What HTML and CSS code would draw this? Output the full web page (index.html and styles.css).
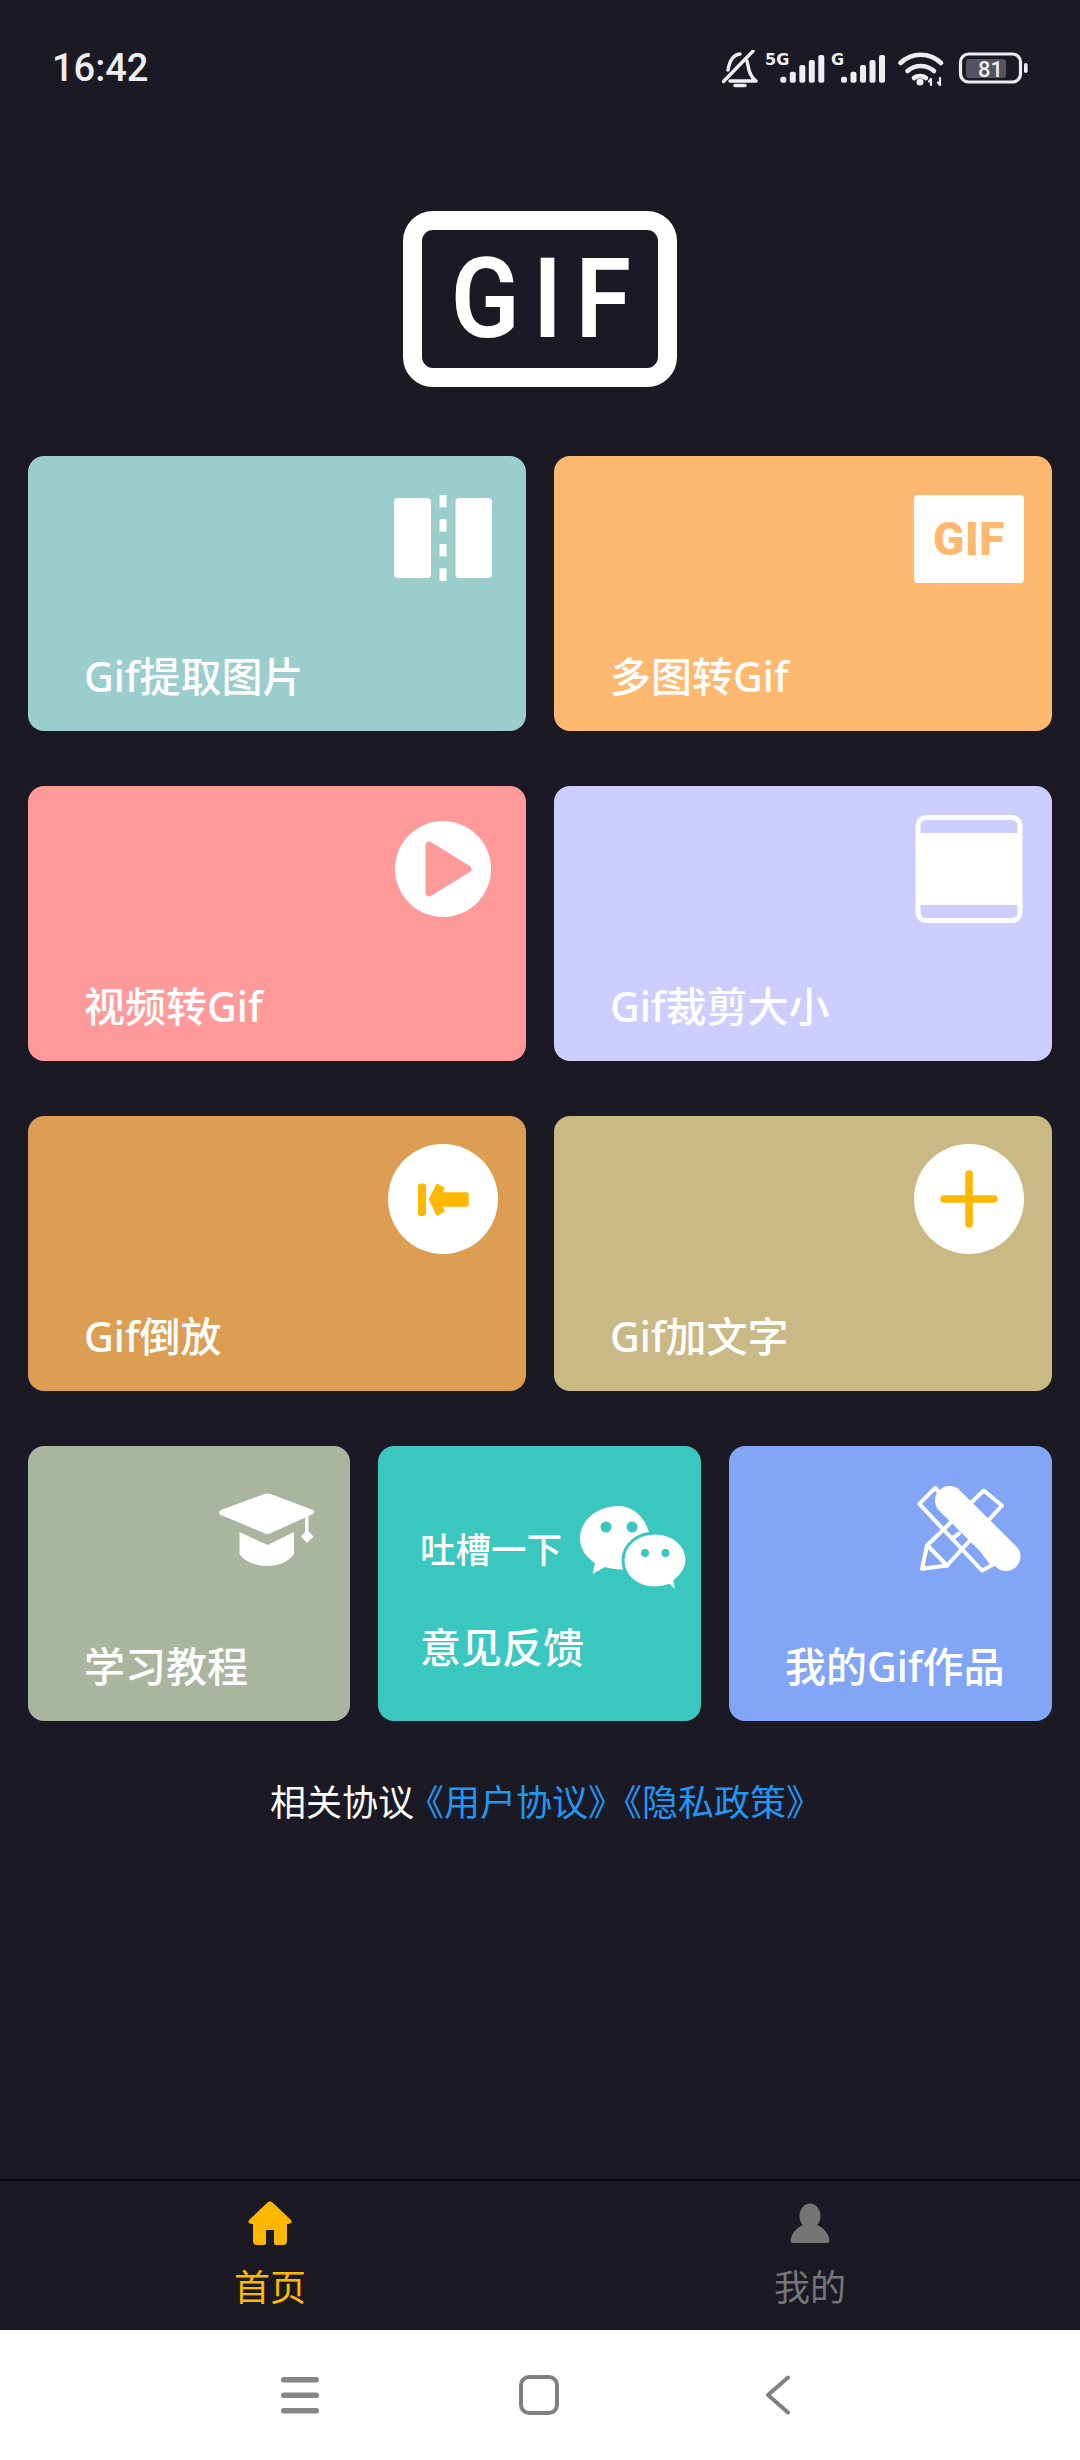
FILE: index.html
```html
<!DOCTYPE html>
<html lang="zh-CN">
<head>
    <meta charset="UTF-8">
    <meta name="viewport" content="width=device-width, initial-scale=1.0">
    <title>GIF</title>
    <link rel="stylesheet" href="styles.css">
</head>
<body>
    <div class="page">
        <div class="status-bar">
            <span class="time">16:42</span>
            <div class="status-icons">
                <!-- bell muted -->
                <svg class="ic-bell" width="36" height="38" viewBox="0 0 36 38" fill="none" stroke="#eeeef0" stroke-width="3.4" stroke-linecap="round" stroke-linejoin="round">
                    <path d="M1.5 31.5 31 1"/>
                    <path d="M6 20C7 14 9 5 18 4M25 11C26.500 16 26 25 34 31H8"/>
                    <path d="M13 35.500H23"/>
                </svg>
                <!-- 5G signal -->
                <svg class="ic-sig-a" width="60" height="35" viewBox="0 0 60 35" fill="#eeeef0">
                    <text class="net" x="0" y="15">5G</text>
                    <rect x="15.300" y="26.700" width="6" height="6" rx="2"/>
                    <rect x="24.800" y="21.700" width="6" height="11" rx="2"/>
                    <rect x="34.300" y="15" width="6" height="17.700" rx="2"/>
                    <rect x="43.800" y="10" width="6" height="22.700" rx="2"/>
                    <rect x="53.300" y="5" width="6" height="27.700" rx="2"/>
                </svg>
                <!-- G signal -->
                <svg class="ic-sig-b" width="54" height="35" viewBox="0 0 54 35" fill="#eeeef0">
                    <text class="net" x="0" y="15">G</text>
                    <rect x="10" y="26.700" width="6" height="6" rx="2"/>
                    <rect x="19.500" y="21.700" width="6" height="11" rx="2"/>
                    <rect x="29" y="15" width="6" height="17.700" rx="2"/>
                    <rect x="38.500" y="10" width="6" height="22.700" rx="2"/>
                    <rect x="48" y="5" width="6" height="27.700" rx="2"/>
                </svg>
                <!-- wifi -->
                <svg class="ic-wifi" width="48" height="38" viewBox="0 0 48 38" fill="none" stroke="#eeeef0" stroke-width="4.600" stroke-linecap="round">
                    <path d="M2.500 13A29 29 0 0 1 43 13"/>
                    <path d="M9.500 21A20 20 0 0 1 36 21"/>
                    <path d="M16 28A10.500 10.500 0 0 1 28 28"/>
                    <circle cx="22" cy="32" r="3.500" fill="#eeeef0" stroke="none"/>
                    <path d="M33 29V35M31 31.500 33 29M42 28V35M40 32.500 42 35" stroke-width="2.200"/>
                </svg>
                <!-- battery -->
                <svg class="ic-batt" width="72" height="34" viewBox="0 0 72 34">
                    <rect x="3.500" y="3" width="60" height="28" rx="8" fill="none" stroke="#eeeef0" stroke-width="3.200"/>
                    <rect x="9" y="8" width="40" height="19" rx="3" fill="#55535f"/>
                    <text class="batt-num" x="33.500" y="26" text-anchor="middle">81</text>
                    <rect x="67" y="12" width="3.600" height="10" rx="1.800" fill="#eeeef0"/>
                </svg>
            </div>
        </div>

        <div class="logo-wrap">
            <div class="logo"><span class="logo-text">GIF</span></div>
        </div>

        <div class="cards">
            <div class="card c-teal">
                <svg class="card-ic" viewBox="0 0 110 110" fill="#fff">
                    <rect x="6" y="14" width="37" height="80" rx="4"/>
                    <rect x="67.500" y="14" width="36.500" height="80" rx="4"/>
                    <rect x="51.500" y="11" width="7" height="12.300"/>
                    <rect x="51.500" y="35.300" width="7" height="12.300"/>
                    <rect x="51.500" y="60" width="7" height="12.300"/>
                    <rect x="51.500" y="84.300" width="7" height="12.700"/>
                </svg>
                <span class="card-label">Gif提取图片</span>
            </div>
            <div class="card c-orange">
                <svg class="card-ic" viewBox="0 0 110 110">
                    <rect x="0" y="11" width="110" height="88" rx="4" fill="#fff"/>
                    <text class="gif-mini" x="55" y="71" text-anchor="middle">GIF</text>
                </svg>
                <span class="card-label">多图转Gif</span>
            </div>
            <div class="card c-pink">
                <svg class="card-ic" viewBox="0 0 110 110">
                    <circle cx="55" cy="55" r="48" fill="#fff"/>
                    <path d="M41 31V79L80 55Z" fill="#ff9a9b" stroke="#ff9a9b" stroke-width="7" stroke-linejoin="round"/>
                </svg>
                <span class="card-label">视频转Gif</span>
            </div>
            <div class="card c-lav">
                <svg class="card-ic" viewBox="0 0 110 110" fill="#fff">
                    <rect x="4" y="3.500" width="102" height="103" rx="8" fill="none" stroke="#fff" stroke-width="5"/>
                    <rect x="3" y="19" width="104" height="72" rx="4"/>
                </svg>
                <span class="card-label">Gif裁剪大小</span>
            </div>
            <div class="card c-amber">
                <svg class="card-ic" viewBox="0 0 110 110">
                    <circle cx="55" cy="55" r="55" fill="#fff"/>
                    <rect x="30" y="39.500" width="8" height="32.500" rx="3" fill="#ffb700"/>
                    <path d="M41.500 55 49 40.500 56 44 53.500 49H78.500Q80 49 80 50.500V60.500Q80 62 78.500 62H53.500L56 67 49 71Z" fill="#ffb700" stroke="#ffb700" stroke-width="1.500" stroke-linejoin="round"/>
                </svg>
                <span class="card-label">Gif倒放</span>
            </div>
            <div class="card c-khaki">
                <svg class="card-ic" viewBox="0 0 110 110">
                    <circle cx="55" cy="55" r="55" fill="#fff"/>
                    <path d="M55 30V80M30 55H80" stroke="#ffb700" stroke-width="7.500" stroke-linecap="round"/>
                </svg>
                <span class="card-label">Gif加文字</span>
            </div>
        </div>

        <div class="cards-three">
            <div class="card c-sage">
                <svg class="card-ic" viewBox="0 0 110 110" fill="#fff">
                    <path d="M7 39Q7 37.500 9 36L53 19.800Q55.500 19 58 19.800L101 36Q103 37.500 101 40L58 59.500Q55.500 60.500 53 59.500L9 41Q7 40 7 39Z"/>
                    <path d="M27.500 58 55.500 71 82 58V80C77 88 66 92 55 92 44 92 33 88 27.500 80Z"/>
                    <rect x="93" y="42" width="3.500" height="17"/>
                    <path d="M95 56 101.500 62.500 95 69 89 62.500Z"/>
                </svg>
                <span class="card-label">学习教程</span>
            </div>
            <div class="card card-talk c-green">
                <div class="talk-top">
                    <span class="talk-small">吐槽一下</span>
                    <svg class="ic-wechat" width="108" height="87" viewBox="0 0 108 87">
                        <path d="M38 0C17 0 0 14.500 0 32 0 43 6 51 15 57L12.500 68 25 61C32 63 40 64 47 63L70 30C66 12 54 0 38 0Z" fill="#fff"/>
                        <circle cx="26" cy="21" r="5.500" fill="#39c7bf"/>
                        <circle cx="52" cy="21" r="5.500" fill="#39c7bf"/>
                        <path d="M75 27C57 27 43 39 43 54.500 43 70 57 82 75 82 80 82 85 81 89 79.500L97 86.500 95 75C102 69 107 62 107 54.500 107 39 93 27 75 27Z" fill="#fff" stroke="#39c7bf" stroke-width="3"/>
                        <circle cx="65" cy="47" r="4" fill="#39c7bf"/>
                        <circle cx="85.500" cy="47" r="4" fill="#39c7bf"/>
                    </svg>
                </div>
                <span class="card-label talk-label">意见反馈</span>
            </div>
            <div class="card c-blue">
                <svg class="card-ic" viewBox="0 0 110 110" fill="none" stroke="#fff" stroke-width="4" stroke-linecap="round" stroke-linejoin="round">
                    <path d="M21.300 13.800 5.300 29.800 68 96.500 78.700 90.800Z"/>
                    <path d="M69.700 16.500 88 31.500 33 91.500 8 94.800 13 71.500Z"/>
                    <path d="M13.500 71.500 33 91.500M38 64.500 45 59.500"/>
                    <path d="M35.500 26.500 92 82.500" stroke-width="29"/>
                </svg>
                <span class="card-label">我的Gif作品</span>
            </div>
        </div>

        <p class="links"><span>相关协议</span><span class="link">《用户协议》《隐私政策》</span></p>

        <div class="spacer"></div>

        <div class="tabbar">
            <div class="tab tab-on">
                <svg class="tab-ic" width="44" height="44" viewBox="0 0 44 44" fill="#ffb700">
                    <path d="M19.500 1.500Q22 -.5 24.500 1.500L43 19Q45 22.500 40.500 23H39V40Q39 44 35 44H28Q26 44 26 42V29H18V42Q18 44 16 44H9Q5 44 5 40V23H3.500Q-1 22.500 1 19Z"/>
                </svg>
                <span class="tab-text">首页</span>
            </div>
            <div class="tab">
                <svg class="tab-ic" width="44" height="44" viewBox="0 0 44 44" fill="#757575">
                    <ellipse cx="22" cy="15" rx="10.500" ry="12.500"/>
                    <path d="M15 24C8 27 3 33 2.500 40Q2.500 42 5 42H39Q41.500 42 41.500 40C41 33 36 27 29 24 25 27 19 27 15 24Z"/>
                </svg>
                <span class="tab-text">我的</span>
            </div>
        </div>

        <div class="navbar">
            <svg width="40" height="40" viewBox="0 0 40 40" fill="#868686">
                <rect x="1" y="2" width="38" height="5.500" rx="2.700"/>
                <rect x="1" y="17.500" width="38" height="5.500" rx="2.700"/>
                <rect x="1" y="33" width="38" height="5.500" rx="2.700"/>
            </svg>
            <svg width="40" height="40" viewBox="0 0 40 40">
                <rect x="2" y="2" width="36" height="36" rx="8" fill="none" stroke="#808080" stroke-width="4"/>
            </svg>
            <svg width="40" height="40" viewBox="0 0 40 40">
                <path d="M30 2.500 10 20 30 37.500" fill="none" stroke="#808080" stroke-width="4" stroke-linecap="round" stroke-linejoin="round"/>
            </svg>
        </div>
    </div>
</body>
</html>
```

FILE: styles.css
```css
* {
    box-sizing: border-box;
}
body {
    margin: 0;
    background-color: #1b1a24;
    color: #fff;
    font-family: "Noto Sans CJK SC", "Noto Sans", sans-serif;
}
.page {
    width: 1080px;
    height: 2460px;
    display: flex;
    flex-direction: column;
    overflow: hidden;
}

/* status bar */
.status-bar {
    height: 100px;
    padding: 0 51px 0 52px;
    display: flex;
    justify-content: space-between;
    align-items: flex-start;
}
.time {
    margin-top: 46px;
    font-family: Roboto, sans-serif;
    font-size: 38px;
    font-weight: 500;
    line-height: 45px;
    color: #eeeef0;
}
.status-icons {
    display: flex;
    align-items: flex-start;
    padding-top: 50px;
}
.ic-sig-a {
    margin-left: 7px;
}
.ic-sig-b {
    margin-left: 6px;
}
.ic-wifi {
    margin-left: 13px;
}
.ic-batt {
    margin: 1px 0 0 11px;
}
.net {
    font-family: "DejaVu Sans", sans-serif;
    font-size: 16px;
    font-weight: 700;
}
.batt-num {
    font-family: Roboto, sans-serif;
    font-size: 22px;
    font-weight: 500;
    fill: #eeeef0;
}

/* logo */
.logo-wrap {
    display: flex;
    justify-content: center;
    padding-top: 111px;
}
.logo {
    width: 274px;
    height: 176px;
    border: 19px solid #fff;
    border-radius: 30px;
    display: flex;
    align-items: center;
    justify-content: center;
}
.logo-text {
    font-family: Roboto, sans-serif;
    font-size: 112px;
    font-weight: 600;
    line-height: 1;
    letter-spacing: 15px;
    margin-right: -15px;
    transform: scaleX(.9);
}

/* cards */
.cards {
    display: grid;
    grid-template-columns: 498px 498px;
    grid-auto-rows: 275px;
    gap: 55px 28px;
    margin: 69px 28px 0;
}
.cards-three {
    display: grid;
    grid-template-columns: 322px 323px 323px;
    gap: 28px;
    margin: 55px 28px 0;
}
.card {
    height: 275px;
    border-radius: 16px;
    display: flex;
    flex-direction: column;
    justify-content: space-between;
}
.card-ic {
    width: 110px;
    height: 110px;
    margin: 28px 28px 0 0;
    align-self: flex-end;
}
.card-label {
    padding: 0 0 27px 56px;
    font-family: "Noto Sans", "Noto Sans CJK SC", sans-serif;
    font-size: 41px;
    font-weight: 500;
    line-height: 56px;
    white-space: nowrap;
}
.gif-mini {
    font-family: Roboto, sans-serif;
    font-size: 46px;
    font-weight: 900;
    letter-spacing: .5px;
    fill: #ffb86f;
}
.c-teal { background-color: #9bcdcd; }
.c-orange { background-color: #ffb86f; }
.c-pink { background-color: #ff9a9b; }
.c-lav { background-color: #cdcdff; }
.c-amber { background-color: #dc9e52; }
.c-khaki { background-color: #c8b985; }
.c-sage { background-color: #aab5a0; }
.c-green { background-color: #39c7bf; }
.c-blue { background-color: #82a6f5; }

.talk-top {
    display: flex;
    justify-content: space-between;
    align-items: flex-start;
    padding: 60px 13px 0 42px;
}
.talk-small {
    margin-top: 17px;
    font-size: 35.500px;
    font-weight: 500;
    line-height: 50px;
}
.talk-label {
    padding: 0 0 46px 42px;
}

/* footer text */
.links {
    margin: 51px 0 0;
    padding-left: 12px;
    display: flex;
    justify-content: center;
    font-size: 36px;
    line-height: 56px;
}
.link {
    color: #2196f3;
    margin-left: 12px;
    text-spacing-trim: trim-start;
}
.spacer {
    flex: 1;
}

/* bottom tabs */
.tabbar {
    height: 151px;
    border-top: 2px solid #08080c;
    display: flex;
}
.tab {
    flex: 1;
    display: flex;
    flex-direction: column;
    align-items: center;
    padding-top: 20px;
    color: #757575;
}
.tab-ic {
    flex: none;
}
.tab-on {
    color: #ffb700;
}
.tab-text {
    margin-top: 15px;
    font-size: 36px;
    line-height: 50px;
}

/* system nav */
.navbar {
    height: 130px;
    background-color: #fff;
    display: flex;
    justify-content: center;
    gap: 199px;
    padding: 45px 2px 0 0;
}
```
